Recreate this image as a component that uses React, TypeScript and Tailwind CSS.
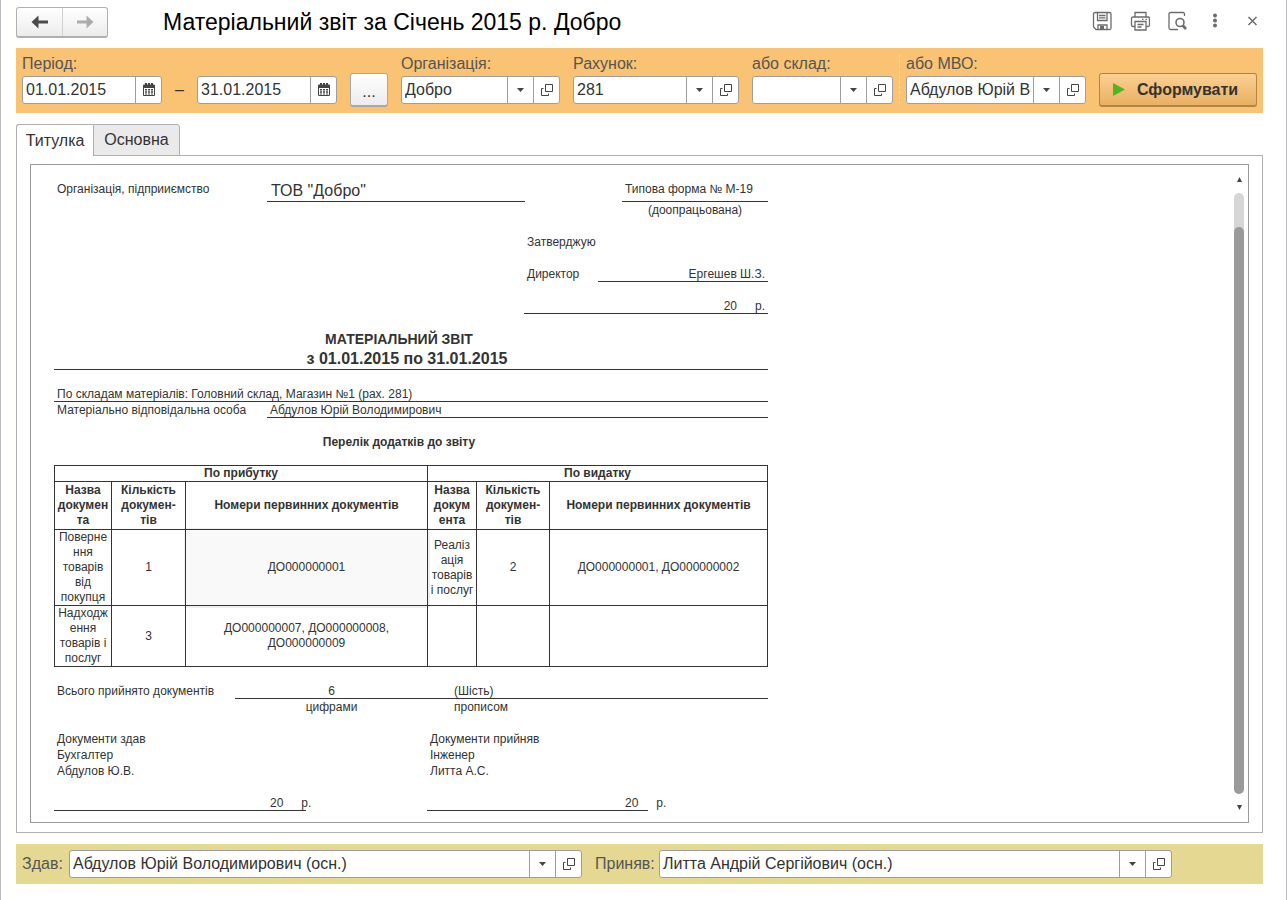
import type { ReactNode } from "react"
import clsx from "clsx"

function CalendarIcon() {
  return (
    <svg width="14" height="14" viewBox="0 0 14 14" aria-hidden="true">
      <path d="M1 3.500h12v8.500a1 1 0 0 1-1 1H2a1 1 0 0 1-1-1z" fill="#444" />
      <path d="M1 2.500a1 1 0 0 1 1-1h10a1 1 0 0 1 1 1V4.500H1z" fill="#444" />
      <path d="M3 0h2v3H3zM6 0h2v3H6zM9 0h2v3H9z" fill="#444" />
      <path d="M2 5h10v7H2z" fill="#fff" />
      <path
        d="M3 6h2v1.500H3zM6 6h2v1.500H6zM9 6h2v1.500H9zM3 8.200h2v1.500H3zM6 8.200h2v1.500H6zM9 8.200h2v1.500H9zM3 10.400h2v1.200H3zM6 10.400h2v1.200H6zM9 10.400h2v1.200H9z"
        fill="#444"
      />
    </svg>
  )
}

function OpenIcon() {
  return (
    <svg width="14" height="14" viewBox="0 0 14 14" fill="none" stroke="#444" aria-hidden="true">
      <path d="M5.500 1.500h7v7h-7z" />
      <path d="M3.500 5.500h-2v7h7v-2" />
    </svg>
  )
}

function NavArrow({ className, flip }: { className: string; flip?: boolean }) {
  return (
    <svg width="18" height="14" viewBox="0 0 18 14" className={className} aria-hidden="true">
      <path d={flip ? "M17.500 7l-7-6.500v5H1v3h9.500v5z" : "M.5 7l7-6.500v5H17v3H7.500v5z"} fill="currentColor" />
    </svg>
  )
}

type DateFieldProps = { id: string; label: string; value: string }

function DateField({ id, label, value }: DateFieldProps) {
  return (
    <div className="flex h-7 w-[140px] overflow-hidden rounded-[3px] border border-[#9e9e9e] bg-white">
      <input
        id={id}
        aria-label={label}
        defaultValue={value}
        className="min-w-0 flex-1 px-[3px] text-base text-[#333] outline-none"
      />
      <button type="button" aria-label="Вибрати дату" className="flex w-[26px] items-center justify-center border-l border-[#9e9e9e]">
        <CalendarIcon />
      </button>
    </div>
  )
}

function SelectField({ id, value }: { id: string; value: string }) {
  return (
    <div className="flex h-7 w-full overflow-hidden rounded-[3px] border border-[#9e9e9e] bg-white">
      <div className="relative min-w-0 flex-1">
        <select
          id={id}
          defaultValue={value}
          className="block h-full w-full appearance-none pr-7 pl-[3px] text-base text-[#333] outline-none"
        >
          <option value={value}>{value}</option>
        </select>
        <span className="pointer-events-none absolute inset-y-0 right-0 flex w-[26px] items-center justify-center border-l border-[#9e9e9e] bg-white">
          <svg width="7" height="4" viewBox="0 0 7 4" aria-hidden="true">
            <path d="M0 0h7L3.500 4z" fill="#444" />
          </svg>
        </span>
      </div>
      <button type="button" aria-label="Відкрити" className="flex w-[26px] items-center justify-center border-l border-[#9e9e9e]">
        <OpenIcon />
      </button>
    </div>
  )
}

function LabeledSelect({ id, label, value, className }: { id: string; label: string; value: string; className: string }) {
  return (
    <div className={clsx("flex min-w-0 flex-col", className)}>
      <label htmlFor={id} className="h-[21px] leading-[18px] whitespace-nowrap text-[#555]">
        {label}
      </label>
      <SelectField id={id} value={value} />
    </div>
  )
}

function IconButton({ label, children }: { label: string; children: ReactNode }) {
  return (
    <button type="button" aria-label={label} className="flex size-5 items-center justify-center text-[#6b6b6b]">
      {children}
    </button>
  )
}

function TitleBar() {
  return (
    <header className="flex h-12 items-center pb-1">
      <div className="flex h-[31px] shrink-0 overflow-hidden rounded-[3px] border border-b-2 border-[#b0b0b0] bg-linear-to-b from-white to-[#ececec]">
        <button type="button" aria-label="Назад" className="flex w-[45px] items-center justify-center">
          <NavArrow className="text-[#4a4a4a]" />
        </button>
        <button type="button" aria-label="Вперед" className="flex w-[45px] items-center justify-center border-l border-[#d0d0d0]">
          <NavArrow className="text-[#acacac]" flip />
        </button>
      </div>
      <h1 className="ml-[55px] flex-1 text-[23px] leading-7 text-black">Матеріальний звіт за Січень 2015 р. Добро</h1>
      <div className="-mr-px flex items-center gap-[18px] pb-0.5">
        <IconButton label="Зберегти">
          <svg width="20" height="20" viewBox="0 0 20 20" fill="none" stroke="currentColor" strokeWidth="1.3" aria-hidden="true">
            <path d="M3 1.500h14.500a1.500 1.500 0 0 1 1.500 1.500v14a1.500 1.500 0 0 1-1.500 1.500H4l-2.500-2.500V3A1.500 1.500 0 0 1 3 1.500z" />
            <path d="M5.500 1.500v8h9.500v-8M7 4.500h6.500M7 6.800h6.500M6 18.500v-4.500h9v4.500" />
            <path d="M8 15h4v3.500H8z" fill="currentColor" stroke="none" />
          </svg>
        </IconButton>
        <IconButton label="Друк">
          <svg width="20" height="20" viewBox="0 0 20 20" fill="none" stroke="currentColor" strokeWidth="1.3" aria-hidden="true">
            <path d="M5 6V1.500h11V6M5 15.500H3A1.500 1.500 0 0 1 1.500 14V7.500A1.500 1.500 0 0 1 3 6h15a1.500 1.500 0 0 1 1.500 1.500V14a1.500 1.500 0 0 1-1.500 1.500h-2" />
            <path d="M5 10.500h11v8.500H5zM7.500 13.500h6M7.500 16h4M12 8.300h1.500M15.500 8.300H17" />
          </svg>
        </IconButton>
        <IconButton label="Попередній перегляд">
          <svg width="20" height="20" viewBox="0 0 20 20" fill="none" stroke="currentColor" strokeWidth="1.3" aria-hidden="true">
            <path d="M16.500 5V3A1.500 1.500 0 0 0 15 1.500H2.500A1.500 1.500 0 0 0 1 3v14a1.500 1.500 0 0 0 1.500 1.500H10" />
            <circle cx="12" cy="11.500" r="4" strokeWidth="1.600" />
            <path d="M14.800 14.500l3.200 3.500" strokeWidth="2.600" />
          </svg>
        </IconButton>
        <IconButton label="Ще">
          <svg width="20" height="20" viewBox="0 0 20 20" fill="currentColor" aria-hidden="true">
            <circle cx="9" cy="4.500" r="2" />
            <circle cx="9" cy="9.500" r="2" />
            <circle cx="9" cy="14.500" r="2" />
          </svg>
        </IconButton>
        <IconButton label="Закрити">
          <svg width="20" height="20" viewBox="0 0 20 20" fill="none" stroke="currentColor" strokeWidth="1.500" aria-hidden="true">
            <path d="M4.500 6l8 8M12.500 6l-8 8" />
          </svg>
        </IconButton>
      </div>
    </header>
  )
}

function FilterBar() {
  return (
    <div className="flex items-end gap-[13px] bg-[#fac373] px-1.5 pt-[7px] pb-[9px]">
      <div className="shrink-0">
        <label htmlFor="date-from" className="block h-[21px] leading-[18px] text-[#555]">
          Період:
        </label>
        <div className="flex items-center">
          <DateField id="date-from" label="Початок періоду" value="01.01.2015" />
          <span className="w-[35px] text-center">–</span>
          <DateField id="date-to" label="Кінець періоду" value="31.01.2015" />
        </div>
      </div>
      <button
        type="button"
        className="-mb-[3px] h-[34px] w-[38px] shrink-0 rounded-[3px] border border-b-2 border-[#a8a8a8] bg-linear-to-b from-white to-[#ececec] pt-1"
      >
        ...
      </button>
      <LabeledSelect id="org" label="Організація:" value="Добро" className="flex-[159]" />
      <LabeledSelect id="account" label="Рахунок:" value="281" className="flex-[166]" />
      <LabeledSelect id="store" label="або склад:" value="" className="flex-[141]" />
      <div className="-mx-[7px] w-px self-stretch border-l border-dashed border-[#dcdcdc]" />
      <LabeledSelect id="person" label="або МВО:" value="Абдулов Юрій Володимирович" className="flex-[180]" />
      <button
        type="button"
        className="-mb-[3px] flex h-[34px] w-[158px] shrink-0 items-center rounded-[3px] border border-b-2 border-[#b08548] bg-linear-to-b from-[#fdd092] to-[#e8b062] pl-[13px] font-bold"
      >
        <svg width="12" height="13" viewBox="0 0 12 13" className="mr-3" aria-hidden="true">
          <path d="M0 0l12 6.500L0 13z" fill="#4cb81c" />
        </svg>
        Сформувати
      </button>
    </div>
  )
}

const incomeHead = ["Назва\nдокумен\nта", "Кількість\nдокумен-\nтів", "Номери первинних документів"]
const expenseHead = ["Назва\nдокум\nента", "Кількість\nдокумен-\nтів", "Номери первинних документів"]

const rows = [
  ["Поверне\nння\nтоварів\nвід\nпокупця", "1", "ДО000000001", "Реаліз\nація\nтоварів\nі послуг", "2", "ДО000000001, ДО000000002"],
  ["Надходж\nення\nтоварів і\nпослуг", "3", "ДО000000007, ДО000000008,\nДО000000009", "", "", ""],
]

function AttachmentsTable() {
  return (
    <table className="w-[714px] table-fixed border-collapse text-center leading-[15px] whitespace-pre-line [&_td]:border [&_td]:border-[#333] [&_td]:p-0 [&_th]:border [&_th]:border-[#333] [&_th]:p-0">
      <colgroup>
        <col className="w-[57px]" />
        <col className="w-[74px]" />
        <col className="w-[242px]" />
        <col className="w-[49px]" />
        <col className="w-[73px]" />
        <col />
      </colgroup>
      <thead>
        <tr className="h-4">
          <th colSpan={3}>По прибутку</th>
          <th colSpan={3}>По видатку</th>
        </tr>
        <tr className="h-12">
          {[...incomeHead, ...expenseHead].map((text, i) => (
            <th key={i}>{text}</th>
          ))}
        </tr>
      </thead>
      <tbody>
        {rows.map((row, r) => (
          <tr key={r}>
            {row.map((text, c) => (
              <td key={c} className={clsx(r === 0 && c === 2 && "bg-[#f9f9f9] shadow-[0_0_0_2px_#f0f0f0]")}>
                {text}
              </td>
            ))}
          </tr>
        ))}
      </tbody>
    </table>
  )
}

function Report() {
  return (
    <div className="w-[714px] text-xs leading-4 whitespace-nowrap">
      <div className="flex">
        <span className="w-[213px] pl-[3px]">Організація, підприиємство</span>
        <span className="w-[258px] border-b border-[#333] pl-1 text-base leading-5">ТОВ "Добро"</span>
        <span className="ml-auto w-[146px] border-b border-[#333] pl-[3px]">Типова форма № М-19</span>
      </div>
      <div className="ml-auto w-[146px] text-center">(доопрацьована)</div>

      <div className="mt-4 ml-auto w-[244px]">
        <div className="pl-[3px]">Затверджую</div>
        <div className="mt-4 flex">
          <span className="w-[74px] pl-[3px]">Директор</span>
          <span className="h-4 flex-1 border-b border-[#333] pr-[3px] text-right">Ергешев Ш.З.</span>
        </div>
        <div className="mt-4 flex h-4 justify-end gap-[18px] border-b border-[#333] pr-[3px]">
          <span>20</span>
          <span>р.</span>
        </div>
      </div>

      <div className="mt-4 border-b border-[#333] text-center font-bold">
        <h2 className="pr-6 text-sm leading-[18px]">МАТЕРІАЛЬНИЙ ЗВІТ</h2>
        <p className="pr-2 text-base leading-[21px]">з 01.01.2015 по 31.01.2015</p>
      </div>

      <div className="mt-4 h-4 border-b border-[#333] pl-[3px]">
        По складам матеріалів: Головний склад, Магазин №1 (рах. 281)
      </div>
      <div className="flex">
        <span className="w-[213px] pl-[3px]">Матеріально відповідальна особа</span>
        <span className="h-4 flex-1 border-b border-[#333] pl-[3px]">Абдулов Юрій Володимирович</span>
      </div>

      <h3 className="mt-4 mb-[15px] pr-6 text-center font-bold">Перелік додатків до звіту</h3>
      <AttachmentsTable />

      <div className="mt-4 flex">
        <span className="w-[181px] pl-[3px]">Всього прийнято документів</span>
        <div className="flex h-4 flex-1 border-b border-[#333]">
          <span className="w-[193px] text-center">6</span>
          <span className="pl-[26px]">(Шість)</span>
        </div>
      </div>
      <div className="flex pl-[181px]">
        <span className="w-[193px] text-center">цифрами</span>
        <span className="pl-[26px]">прописом</span>
      </div>

      <div className="mt-4 flex">
        <div className="w-[373px]">
          <div className="pl-[3px]">
            <p>Документи здав</p>
            <p>Бухгалтер</p>
            <p>Абдулов Ю.В.</p>
          </div>
          <div className="mt-4 flex h-4 w-[252px] gap-[18px] border-b border-[#333] pl-[216px]">
            <span>20</span>
            <span>р.</span>
          </div>
        </div>
        <div>
          <div className="pl-[3px]">
            <p>Документи прийняв</p>
            <p>Інженер</p>
            <p>Литта А.С.</p>
          </div>
          <div className="mt-4 flex h-4 w-[221px] gap-[18px] border-b border-[#333] pl-[198px]">
            <span>20</span>
            <span>р.</span>
          </div>
        </div>
      </div>
    </div>
  )
}

function ScrollBar() {
  return (
    <div className="flex w-2.5 flex-col items-center" aria-hidden="true">
      <svg width="5" height="5" viewBox="0 0 5 5">
        <path d="M2.500 0L5 5H0z" fill="#444" />
      </svg>
      <div className="my-[11px] flex w-2.5 flex-1 flex-col rounded-full bg-[#d6d6d6] pt-[34px]">
        <div className="flex-1 rounded-full bg-[#9a9a9a]" />
      </div>
      <svg width="5" height="5" viewBox="0 0 5 5">
        <path d="M0 0h5L2.500 5z" fill="#444" />
      </svg>
    </div>
  )
}

function FooterBar() {
  return (
    <footer className="mt-[11px] flex h-10 items-center bg-[#e5d893] pr-[91px] pl-1.5 text-[#555]">
      <label htmlFor="given-by" className="w-[47px] shrink-0">
        Здав:
      </label>
      <SelectField id="given-by" value="Абдулов Юрій Володимирович (осн.)" />
      <label htmlFor="taken-by" className="ml-[13px] w-16 shrink-0">
        Приняв:
      </label>
      <SelectField id="taken-by" value="Литта Андрій Сергійович (осн.)" />
    </footer>
  )
}

export default function App() {
  return (
    <div className="min-h-screen border-x border-[#b9bcc0] bg-white pr-[23px] pl-[15px] font-['Liberation_Sans',Arial,sans-serif] text-base text-[#333]">
      <TitleBar />
      <FilterBar />

      <div role="tablist" className="relative mt-[11px] -mb-px flex">
        <button
          type="button"
          role="tab"
          aria-selected="true"
          className="h-8 w-[77px] rounded-tl-[3px] border border-r-0 border-b-0 border-[#b0b0b0] bg-white"
        >
          Титулка
        </button>
        <button
          type="button"
          role="tab"
          aria-selected="false"
          className="h-8 w-[87px] rounded-tr-[3px] border border-[#b0b0b0] bg-[#eaeaea]"
        >
          Основна
        </button>
      </div>

      <main role="tabpanel" className="border border-[#b0b0b0] px-[13px] pt-2 pb-[9px]">
        <div className="flex justify-between border border-[#9a9a9a] pr-1">
          <div className="pt-4 pr-4 pb-[11px] pl-[23px]">
            <Report />
          </div>
          <div className="flex pt-3 pb-3">
            <ScrollBar />
          </div>
        </div>
      </main>

      <FooterBar />
    </div>
  )
}
